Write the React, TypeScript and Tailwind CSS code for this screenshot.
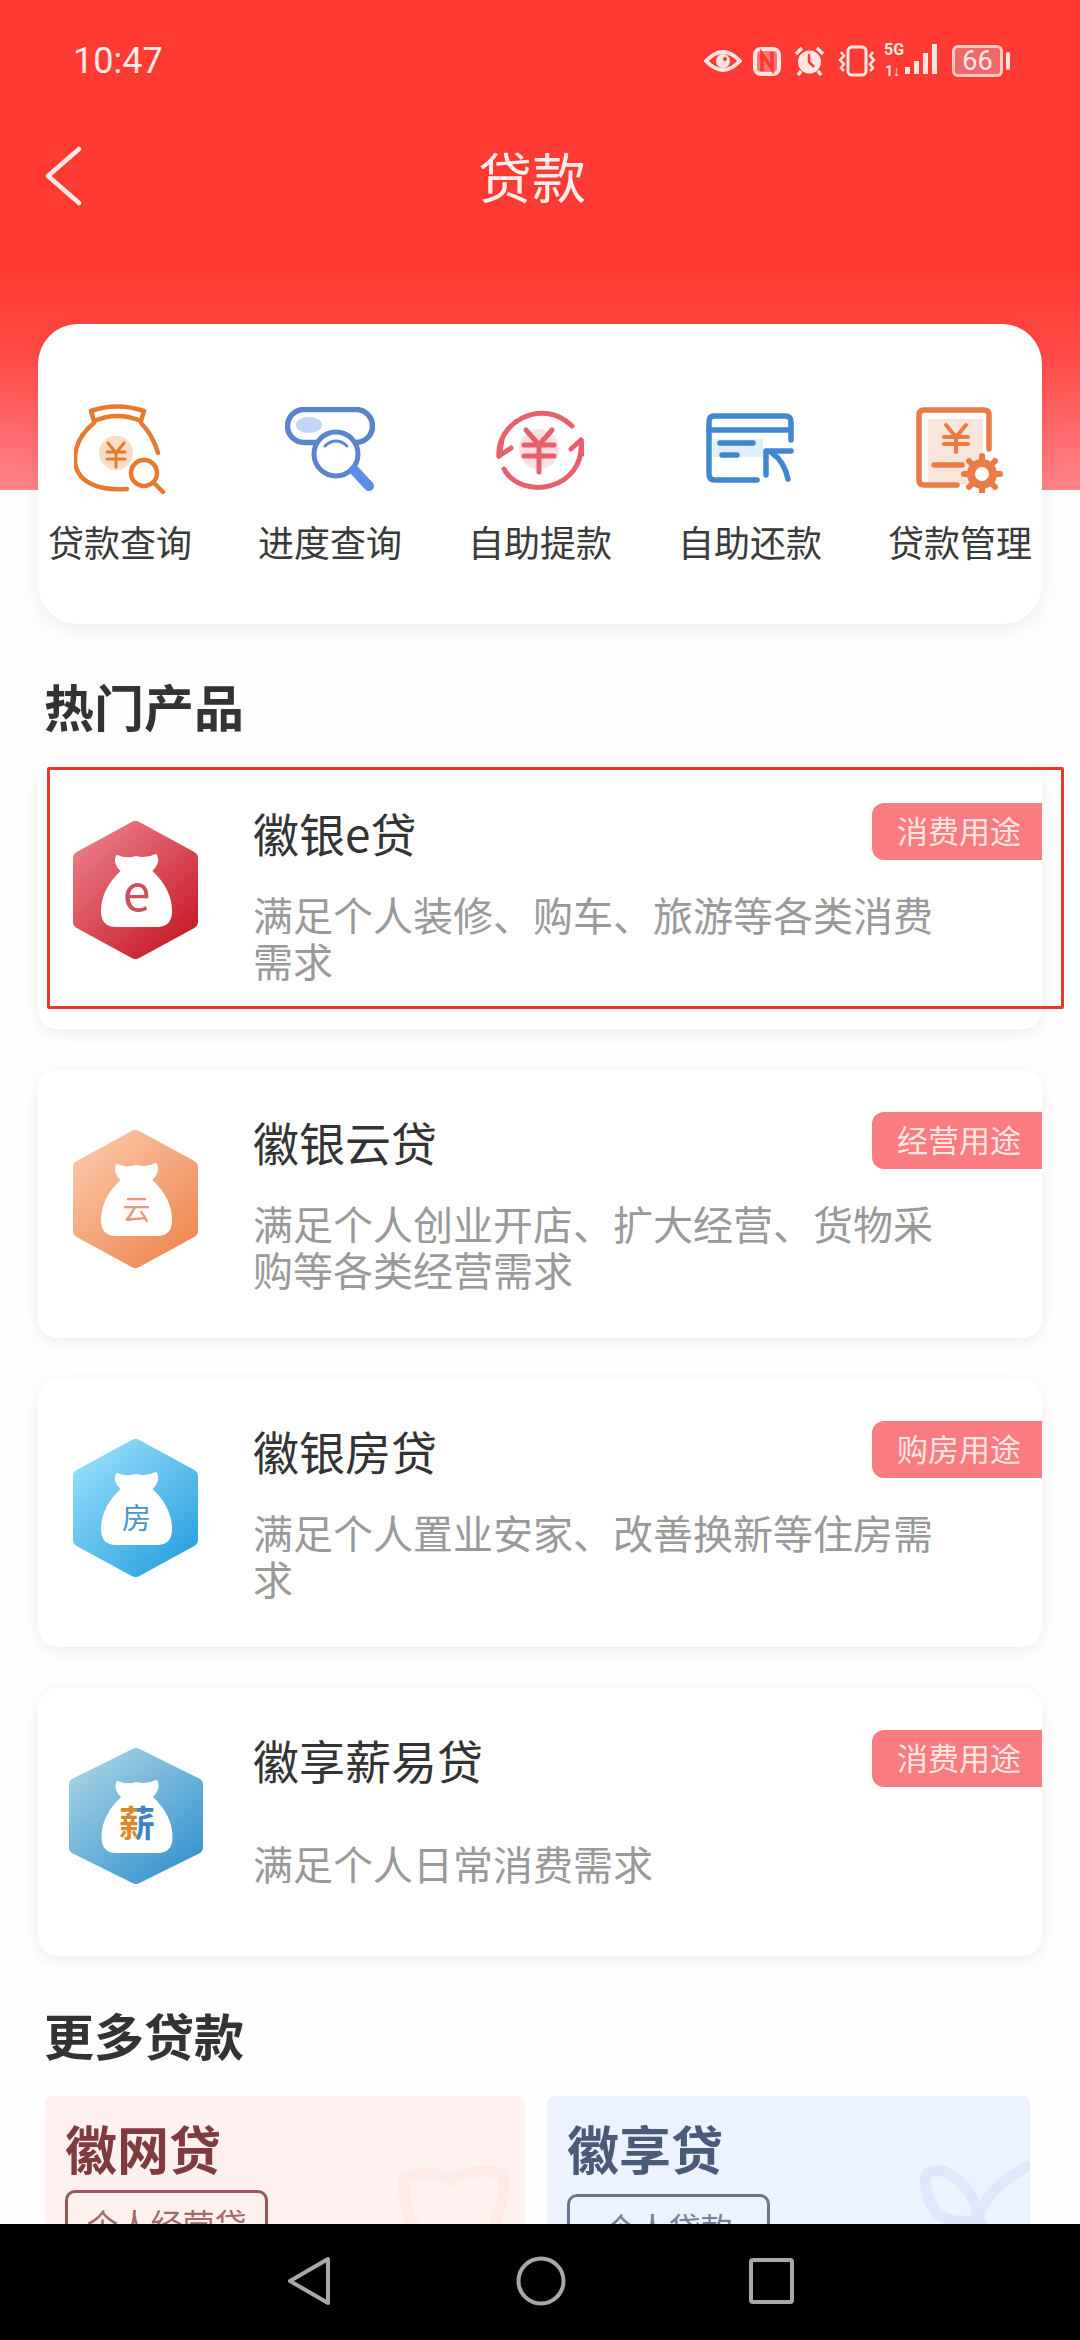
const cjk = "font-['Noto_Sans_CJK_SC','Noto_Sans',sans-serif]";

const BackIcon = () => (
  <svg width="37" height="60" viewBox="0 0 37 60" fill="none" stroke="#ffe9e6" strokeWidth="4.5" strokeLinecap="round" strokeLinejoin="round">
    <path d="M34 3 L3 30 L34 57" />
  </svg>
);

const StatusIcons = () => (
  <div className="flex items-center text-[#ffe6e2]">
    <svg className="mr-[11px]" width="38" height="24" viewBox="0 0 38 24" fill="none">
      <path d="M2 12 Q19 -6 36 12 Q19 30 2 12Z" stroke="currentColor" strokeWidth="4" />
      <circle cx="19" cy="12" r="7" fill="currentColor" />
      <circle cx="21" cy="10" r="2" fill="#ff3b33" />
    </svg>
    <svg className="mr-[13px]" width="28" height="29" viewBox="0 0 28 29" fill="none" stroke="currentColor">
      <rect x="2" y="2" width="24" height="25" rx="6" strokeWidth="4" fill="currentColor" fillOpacity="0.35" />
      <path d="M9 24 V7 L19 22 V5" strokeWidth="3.5" stroke="#ff3b33" />
    </svg>
    <svg className="mr-[12px]" width="31" height="30" viewBox="0 0 31 30" fill="none">
      <circle cx="15.5" cy="16" r="11.5" fill="currentColor" />
      <path d="M15 8 V16 L20 21" stroke="#ff3b33" strokeWidth="2.5" />
      <path d="M2 8 L8 2 M29 8 L23 2 M7 25 L4 29 M24 25 L27 29" stroke="currentColor" strokeWidth="3.5" />
    </svg>
    <svg className="mr-[9px]" width="40" height="32" viewBox="0 0 40 32" fill="none" stroke="currentColor">
      <rect x="11" y="2" width="18" height="28" rx="4" strokeWidth="3" />
      <path d="M4 7 L7 11 L3 15 L7 19 L4 23 L7 26 M36 7 L33 11 L37 15 L33 19 L36 23 L33 26" strokeWidth="2.5" />
    </svg>
    <div className="relative mr-[15px] h-[30px] w-[51px]">
      <span className="absolute left-[-2px] top-[-4px] font-['Roboto',sans-serif] text-[16px] font-bold leading-[16px]">5G</span>
      <span className="absolute bottom-[-2px] left-[-1px] font-['Roboto',sans-serif] text-[14px] font-bold leading-[14px]">1↓</span>
      <svg className="absolute bottom-0 right-0" width="32" height="32" viewBox="0 0 32 32" fill="currentColor">
        <rect x="0" y="23" width="5" height="7" />
        <rect x="9" y="17" width="5" height="13" />
        <rect x="18" y="9" width="5" height="21" />
        <rect x="27" y="0" width="5" height="30" />
      </svg>
    </div>
    <div className="flex items-center">
      <div className="flex h-[32px] w-[51px] items-center justify-center rounded-[6px] border-[3px] border-[#ffc9c4] bg-[#ee6a68] font-['Roboto',sans-serif] text-[27px] leading-none">
        66
      </div>
      <div className="ml-[3px] h-[18px] w-[4px] rounded-[2px] bg-[#ffe6e2]" />
    </div>
  </div>
);

const LoanQueryIcon = () => (
  <svg width="92" height="92" viewBox="0 0 92 92" fill="none" stroke="#e8792f" strokeWidth="4.5" strokeLinecap="round" strokeLinejoin="round">
    <circle cx="42" cy="50" r="17" fill="#f9dcc6" stroke="none" />
    <path d="M20 18 L17 8 Q43 -1 70 8 L67 18 Q43 8 20 18Z" />
    <path d="M20 20 C5 32 1 45 1 56 C1 78 22 88 53 86" />
    <path d="M67 20 C75 28 80 36 84 50" />
    <path d="M34 40 L42 50 L50 40 M33 49 H51 M33 56 H51 M42 50 V64" strokeWidth="3" />
    <circle cx="70" cy="70" r="13" />
    <path d="M80 80 L89 89" />
  </svg>
);

const ProgressIcon = () => (
  <svg width="90" height="84" viewBox="0 0 90 84" fill="none" strokeLinecap="round">
    <rect x="2.5" y="2.5" width="85" height="33" rx="16.5" stroke="#5b84cc" strokeWidth="5.5" />
    <ellipse cx="24" cy="18" rx="13" ry="8" fill="#c5d5f7" />
    <circle cx="51" cy="47" r="22" fill="#fff" stroke="#5b84cc" strokeWidth="5" />
    <path d="M40 39 Q51 29 62 39" stroke="#5b84cc" strokeWidth="3" />
    <path d="M69 63 L84 79" stroke="#5b8de8" strokeWidth="10" />
  </svg>
);

const WithdrawIcon = () => (
  <svg width="88" height="86" viewBox="0 0 88 86" fill="none" stroke="#e8606e" strokeWidth="5" strokeLinecap="round" strokeLinejoin="round">
    <circle cx="43" cy="43" r="20" fill="#fbdfe2" stroke="none" />
    <path d="M3 50 C0 18 45 -10 76 20" />
    <path d="M3 50 L6 34 M3 50 L15 42" />
    <path d="M8 63 C25 95 90 85 85 34" />
    <path d="M85 34 L75 43 M85 34 L87 48" />
    <path d="M30 24 L43 39 L56 24 M28 39 H58 M28 50 H58 M43 39 V66" strokeWidth="5" />
  </svg>
);

const RepayIcon = () => (
  <svg width="88" height="70" viewBox="0 0 88 70" fill="none" stroke="#3f88d0" strokeWidth="5.5" strokeLinecap="round" strokeLinejoin="round">
    <rect x="7" y="26" width="50" height="18" fill="#e2eefa" stroke="none" />
    <path d="M85 27 V9 Q85 3 79 3 H8 Q3 3 3 9 V61 Q3 67 9 67 H51" />
    <path d="M3 17 H84" />
    <path d="M14 30 H47 M16 42 H31" />
    <path d="M60 62 V38 H85" />
    <path d="M66 40 Q78 48 82 66" />
  </svg>
);

const ManageIcon = () => (
  <svg width="88" height="86" viewBox="0 0 88 86" fill="none" stroke="#ec7a45" strokeWidth="5.5" strokeLinecap="round" strokeLinejoin="round">
    <rect x="12" y="12" width="55" height="65" fill="#f8e6dc" stroke="none" />
    <path d="M73 42 V8 Q73 3 68 3 H8 Q3 3 3 8 V73 Q3 78 8 78 H41" />
    <path d="M30 18 L40 30 L50 18 M28 30 H52 M28 37 H52 M40 30 V45" strokeWidth="4" />
    <path d="M18 58 H46" />
    <circle cx="66" cy="67" r="11" stroke="#ec7a45" strokeWidth="8" fill="#fff" />
    <path d="M66 49 V52 M66 82 V85 M48 67 H51 M81 67 H84 M53 54 L55 56 M77 78 L79 80 M79 54 L77 56 M55 78 L53 80" strokeWidth="6" />
  </svg>
);

const quickEntries = [
  { label: "贷款查询", icon: <LoanQueryIcon />, offset: "mt-[79px]" },
  { label: "进度查询", icon: <ProgressIcon />, offset: "mt-[83px]" },
  { label: "自助提款", icon: <WithdrawIcon />, offset: "mt-[82px]" },
  { label: "自助还款", icon: <RepayIcon />, offset: "mt-[89px]" },
  { label: "贷款管理", icon: <ManageIcon />, offset: "mt-[83px]" },
];

type HexProps = {
  id: string;
  from: string;
  to: string;
  w: number;
  h: number;
  mark: string;
  markColor: string;
  markColor2?: string;
  markSize: number;
  markWeight?: number;
};

const HexIcon = ({ id, from, to, w, h, mark, markColor, markColor2, markSize, markWeight = 400 }: HexProps) => {
  const pts = `${w / 2},7 ${w - 7},${h * 0.27} ${w - 7},${h * 0.73} ${w / 2},${h - 7} 7,${h * 0.73} 7,${h * 0.27}`;
  const dx = (w - 125) / 2;
  const dy = (h - 138) / 2;
  return (
    <svg width={w} height={h} viewBox={`0 0 ${w} ${h}`}>
      <defs>
        <linearGradient id={id} x1="0.1" y1="0.05" x2="0.85" y2="0.95">
          <stop offset="0" stopColor={from} />
          <stop offset="1" stopColor={to} />
        </linearGradient>
        <linearGradient id={`${id}Mark`} x1="0" y1="0" x2="1" y2="0">
          <stop offset="0.48" stopColor={markColor} />
          <stop offset="0.52" stopColor={markColor2 ?? markColor} />
        </linearGradient>
      </defs>
      <polygon points={pts} fill={`url(#${id})`} stroke={`url(#${id})`} strokeWidth="14" strokeLinejoin="round" />
      <g transform={`translate(${dx} ${dy})`}>
        <path d="M44 35 Q53 39 63 36 Q73 39 83 34 Q87 42 78 50 C91 62 98 76 98 90 Q98 105 84 105 H43 Q29 105 29 90 C29 76 36 62 49 50 Q40 42 44 35Z" fill="#fff" stroke="#fff" strokeWidth="2" strokeLinejoin="round" />
        <text x="63.5" y="90" textAnchor="middle" fontSize={markSize} fontWeight={markWeight} fill={`url(#${id}Mark)`} fontFamily="'Noto Sans CJK SC','Noto Sans',sans-serif">
          {mark}
        </text>
      </g>
    </svg>
  );
};

const products = [
  {
    name: "徽银e贷",
    desc: "满足个人装修、购车、旅游等各类消费需求",
    tag: "消费用途",
    hex: { id: "hexE", from: "#ea7a86", to: "#c81f2b", w: 125, h: 138, mark: "e", markColor: "#c9525c", markSize: 50 },
  },
  {
    name: "徽银云贷",
    desc: "满足个人创业开店、扩大经营、货物采购等各类经营需求",
    tag: "经营用途",
    hex: { id: "hexYun", from: "#f9c4a5", to: "#f08a55", w: 125, h: 138, mark: "云", markColor: "#e39a7f", markSize: 28 },
  },
  {
    name: "徽银房贷",
    desc: "满足个人置业安家、改善换新等住房需求",
    tag: "购房用途",
    hex: { id: "hexFang", from: "#93dcfa", to: "#2fa4e0", w: 125, h: 138, mark: "房", markColor: "#4a95c8", markSize: 29 },
  },
  {
    name: "徽享薪易贷",
    desc: "满足个人日常消费需求",
    tag: "消费用途",
    hex: { id: "hexXin", from: "#a2d0e2", to: "#3b97d0", w: 134, h: 136, mark: "薪", markColor: "#d98a2b", markColor2: "#3d85c0", markSize: 36, markWeight: 700 },
  },
];

const BowMark = ({ color, right }: { color: string; right?: boolean }) => (
  <svg className={`absolute top-[62px] ${right ? "right-[-6px]" : "right-[10px]"}`} width="120" height="140" viewBox="0 0 120 140" fill="none" stroke={color} strokeWidth="11" strokeLinecap="round">
    {right ? (
      <path d="M10 30 Q5 8 30 14 Q60 30 62 62 Q70 30 112 8 M62 62 Q30 90 14 130 M62 62 Q90 90 110 130 M10 30 Q15 70 62 62" />
    ) : (
      <path d="M8 22 Q30 8 55 22 Q80 8 108 16 Q112 40 100 60 Q115 85 112 130 M8 22 Q8 50 20 70 Q10 90 8 130" />
    )}
  </svg>
);

export default function App() {
  return (
    <div className={`flex h-[2340px] w-[1080px] flex-col overflow-hidden bg-[#fefefe] ${cjk}`}>
      <div className="h-[2224px] overflow-hidden">
        <div className="h-[490px] bg-[linear-gradient(180deg,#ff3b33_0%,#ff3b33_56%,#ff4a45_72%,#ff8489_100%)]">
          <div className="flex items-center justify-between pl-[73px] pr-[70px] pt-[44px]">
            <span className="font-['Roboto',sans-serif] text-[36px] leading-[34px] text-[#ffe9e6]">10:47</span>
            <StatusIcons />
          </div>
          <div className="mt-[68px] flex items-center pl-[45px] pr-[98px]">
            <BackIcon />
            <div className="flex-1 text-center text-[54px] leading-[60px] text-[#ffeeec]">贷款</div>
          </div>
        </div>

        <div className="relative mx-[38px] -mt-[166px] flex h-[300px] justify-between rounded-[40px] bg-white px-[10px] shadow-[0_6px_20px_rgba(0,0,0,0.07)]">
          {quickEntries.map((entry) => (
            <div key={entry.label} className="flex h-full w-[144px] flex-col items-center">
              <div className="flex h-[195px] flex-col items-center">
                <div className={entry.offset}>{entry.icon}</div>
              </div>
              <div className="text-[36px] leading-[44px] text-[#3a3a3a]">{entry.label}</div>
            </div>
          ))}
        </div>

        <h2 className="ml-[44px] mt-[46px] text-[50px] font-bold leading-[70px] text-[#333]">热门产品</h2>

        <div className="mx-[38px] mt-[21px] flex flex-col gap-[41px]">
          {products.map((item, index) => (
            <div key={item.name} className="relative flex h-[268px] rounded-[20px] bg-white shadow-[0_4px_16px_rgba(0,0,0,0.07)]">
              <div className="flex w-[215px] shrink-0 justify-center pr-[20px] pt-[60px]">
                <HexIcon {...item.hex} />
              </div>
              <div className="w-[690px] pt-[38px]">
                <div className="text-[46px] leading-[66px] text-[#333]">{item.name}</div>
                <div className={`text-[40px] leading-[46px] text-[#999] ${index === 3 ? "mt-[48px]" : "mt-[26px]"}`}>{item.desc}</div>
              </div>
              <div className="absolute right-0 top-[42px] flex h-[57px] w-[170px] items-center justify-end rounded-l-[12px] bg-[#fb7c80] pb-[3px] pr-[21px] text-[31px] text-[#ffe4e2]">
                {item.tag}
              </div>
              {index === 0 && (
                <div className="absolute left-[9px] top-[6px] h-[242px] w-[1017px] rounded-[2px] border-[3px] border-[#e33a2c]" />
              )}
            </div>
          ))}
        </div>

        <h2 className="ml-[44px] mt-[43px] text-[50px] font-bold leading-[70px] text-[#333]">更多贷款</h2>

        <div className="ml-[45px] mt-[27px] flex w-[985px] gap-[22px]">
          <div className="relative h-[200px] w-[480px] overflow-hidden rounded-[8px] bg-[#fff1f0] pl-[20px] pt-[20px]">
            <BowMark color="#fdeae7" />
            <div className="text-[52px] font-bold leading-[64px] text-[#7f3b40]">徽网贷</div>
            <div className="relative mt-[10px] flex h-[64px] w-[203px] justify-center rounded-[10px] border-[3px] border-[#9a5558] pt-[8px] text-[32px] leading-[44px] text-[#a06a6a]">
              个人经营贷
            </div>
          </div>
          <div className="relative h-[200px] w-[483px] overflow-hidden rounded-[8px] bg-[#ecf3fe] pl-[20px] pt-[20px]">
            <BowMark color="#e1e7fb" right />
            <div className="text-[52px] font-bold leading-[64px] text-[#4a5a78]">徽享贷</div>
            <div className="relative mt-[14px] flex h-[64px] w-[203px] justify-center rounded-[10px] border-[3px] border-[#6a7590] pt-[8px] text-[32px] leading-[44px] text-[#757f96]">
              个人贷款
            </div>
          </div>
        </div>
      </div>

      <div className="flex h-[116px] shrink-0 items-center bg-black pb-[2px]">
        <div className="flex w-full items-center pl-[287px]">
          <svg width="44" height="50" viewBox="0 0 44 50" fill="none" stroke="#a8a8a8" strokeWidth="4" strokeLinejoin="round">
            <path d="M41 3 V47 L3 25Z" />
          </svg>
          <svg className="ml-[185px]" width="50" height="50" viewBox="0 0 50 50" fill="none" stroke="#a8a8a8" strokeWidth="4">
            <circle cx="25" cy="25" r="22.5" />
          </svg>
          <svg className="ml-[183px]" width="45" height="46" viewBox="0 0 45 46" fill="none" stroke="#a8a8a8" strokeWidth="4" strokeLinejoin="round">
            <rect x="2" y="2" width="41" height="42" rx="2" />
          </svg>
        </div>
      </div>
    </div>
  );
}
